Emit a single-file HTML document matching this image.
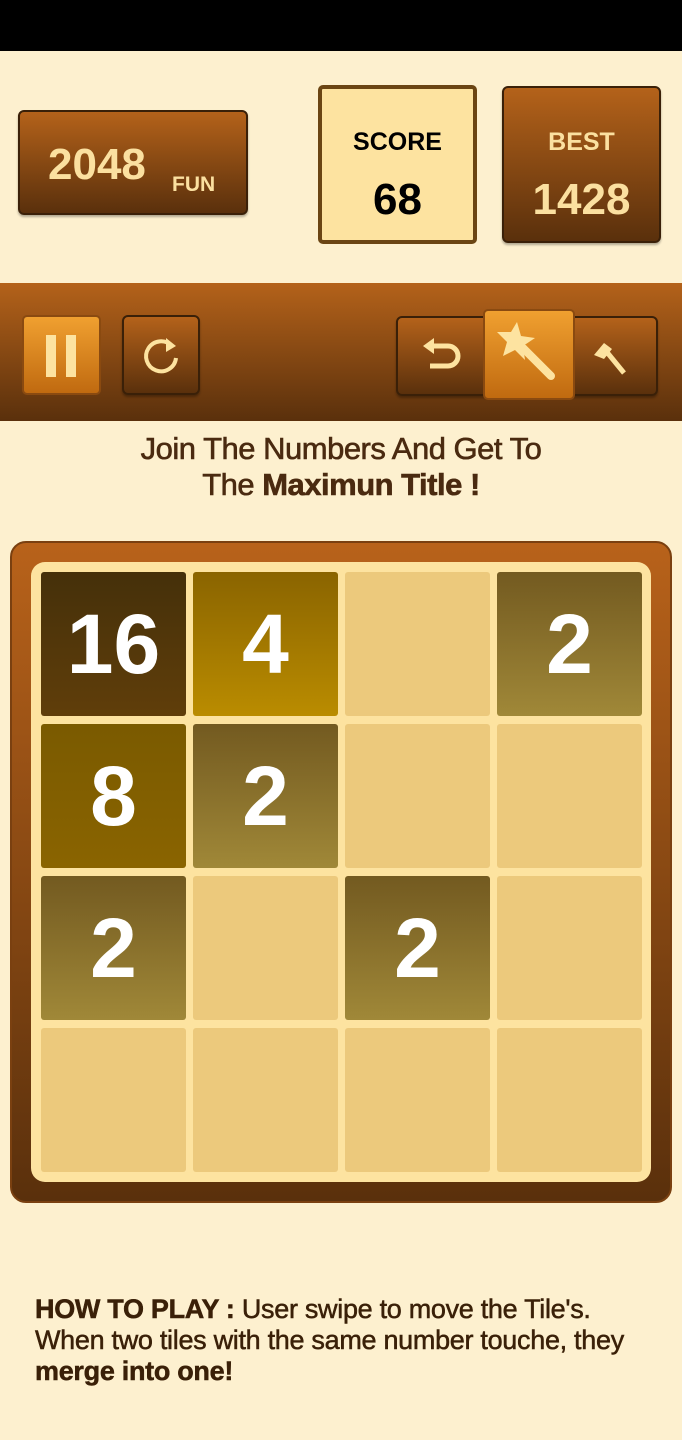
<!DOCTYPE html><html><head><style>
*{margin:0;padding:0;box-sizing:border-box}
body{width:682px;height:1440px;background:#fdf0cf;font-family:"Liberation Sans",sans-serif;position:relative;overflow:hidden}
.a{position:absolute}
.btn{position:absolute;border-radius:6px;background:linear-gradient(#b4621a,#5a300c);border:2px solid #3a2008;box-shadow:0 2px 2px rgba(0,0,0,.3)}
.t{position:absolute;width:145px;height:144px;border-radius:3px;color:#fff;font-weight:bold;font-size:84px;text-align:center;line-height:144px}
.e{background:#ecc97c}
</style></head><body>
<div class="a" style="left:0;top:0;width:682px;height:51px;background:#000"></div>
<div class="btn" style="left:18px;top:110px;width:230px;height:105px"></div>
<div class="a" style="left:48px;top:140px;font-size:44px;font-weight:bold;color:#fbe0a0">2048</div>
<div class="a" style="left:172px;top:173px;font-size:21px;font-weight:bold;color:#fbe0a0">FUN</div>
<div class="a" style="left:318px;top:85px;width:159px;height:159px;border-radius:5px;background:#fde3a0;border:4px solid #6b4513"></div>
<div class="a" style="left:318px;top:128px;width:159px;text-align:center;font-size:25px;font-weight:bold">SCORE</div>
<div class="a" style="left:318px;top:175px;width:159px;text-align:center;font-size:44px;font-weight:bold">68</div>
<div class="btn" style="left:502px;top:86px;width:159px;height:157px"></div>
<div class="a" style="left:502px;top:128px;width:159px;text-align:center;font-size:25px;font-weight:bold;color:#fbe0a0">BEST</div>
<div class="a" style="left:502px;top:175px;width:159px;text-align:center;font-size:44px;font-weight:bold;color:#fbe0a0">1428</div>
<div class="a" style="left:0;top:283px;width:682px;height:138px;background:linear-gradient(#b4621a,#5a300c)"></div>
<div class="a" style="left:22px;top:315px;width:79px;height:80px;border-radius:5px;background:linear-gradient(#f0a030,#c06a10);border:2px solid #8a4a10"></div>
<div class="a" style="left:46px;top:335px;width:10px;height:42px;background:#fde3a0"></div>
<div class="a" style="left:66px;top:335px;width:10px;height:42px;background:#fde3a0"></div>
<div class="btn" style="left:122px;top:315px;width:78px;height:80px"></div>
<svg class="a" style="left:138px;top:332px" width="46" height="46" viewBox="0 0 46 46"><path d="M34 14A15 15 0 1 0 38 26" fill="none" stroke="#fde3a0" stroke-width="4"/><path d="M28 6L38 14L28 20Z" fill="#fde3a0"/></svg>
<div class="btn" style="left:396px;top:316px;width:262px;height:80px"></div>
<svg class="a" style="left:420px;top:336px" width="42" height="40" viewBox="0 0 42 40"><path d="M12 10H28A10 10 0 0 1 28 30H10" fill="none" stroke="#fde3a0" stroke-width="5"/><path d="M3 10L14 2V18Z" fill="#fde3a0"/></svg>
<svg class="a" style="left:590px;top:335px" width="46" height="46" viewBox="0 0 46 46"><path d="M4 20L14 8L22 14L14 24Z" fill="#fde3a0"/><path d="M16 16L34 38" stroke="#fde3a0" stroke-width="5"/></svg>
<div class="a" style="left:483px;top:309px;width:92px;height:91px;border-radius:5px;background:linear-gradient(#f0a030,#c06a10);border:2px solid #8a4a10"></div>
<svg class="a" style="left:495px;top:320px" width="70" height="70" viewBox="0 0 70 70"><path d="M22 2L26 16L40 18L28 26L30 40L20 30L8 36L12 22L2 12L16 12Z" fill="#fde3a0"/><path d="M28 28L56 56" stroke="#fde3a0" stroke-width="8" stroke-linecap="round"/></svg>
<div class="a" style="left:0;top:431px;width:682px;text-align:center;font-size:31px;color:#4a2a10;line-height:36px;-webkit-text-stroke:.6px #4a2a10;letter-spacing:-.5px">Join The Numbers And Get To<br>The <b>Maximun Title !</b></div>
<div class="a" style="left:10px;top:541px;width:662px;height:662px;border-radius:16px;background:linear-gradient(#b8621a,#5a300c);border:2px solid #7a4010"></div>
<div class="a" style="left:31px;top:562px;width:620px;height:620px;border-radius:14px;background:#fde3a0"></div>
<div class="t" style="left:41px;top:572px;background:linear-gradient(#45300a,#603e0a)">16</div>
<div class="t" style="left:193px;top:572px;background:linear-gradient(#8a6400,#ba8c00)">4</div>
<div class="t e" style="left:345px;top:572px"></div>
<div class="t" style="left:497px;top:572px;background:linear-gradient(#735a20,#a08838)">2</div>
<div class="t" style="left:41px;top:724px;background:linear-gradient(#7a5a00,#8a6400)">8</div>
<div class="t" style="left:193px;top:724px;background:linear-gradient(#735a20,#a08838)">2</div>
<div class="t e" style="left:345px;top:724px"></div>
<div class="t e" style="left:497px;top:724px"></div>
<div class="t" style="left:41px;top:876px;background:linear-gradient(#735a20,#a08838)">2</div>
<div class="t e" style="left:193px;top:876px"></div>
<div class="t" style="left:345px;top:876px;background:linear-gradient(#735a20,#a08838)">2</div>
<div class="t e" style="left:497px;top:876px"></div>
<div class="t e" style="left:41px;top:1028px"></div>
<div class="t e" style="left:193px;top:1028px"></div>
<div class="t e" style="left:345px;top:1028px"></div>
<div class="t e" style="left:497px;top:1028px"></div>
<div class="a" style="left:35px;top:1294px;width:660px;font-size:27px;color:#3a2008;line-height:31px;letter-spacing:-.3px;white-space:nowrap;-webkit-text-stroke:.5px #3a2008"><b>HOW TO PLAY :</b> User swipe to move the Tile's.<br>When two tiles with the same number touche, they<br><b>merge into one!</b></div>
</body></html>
